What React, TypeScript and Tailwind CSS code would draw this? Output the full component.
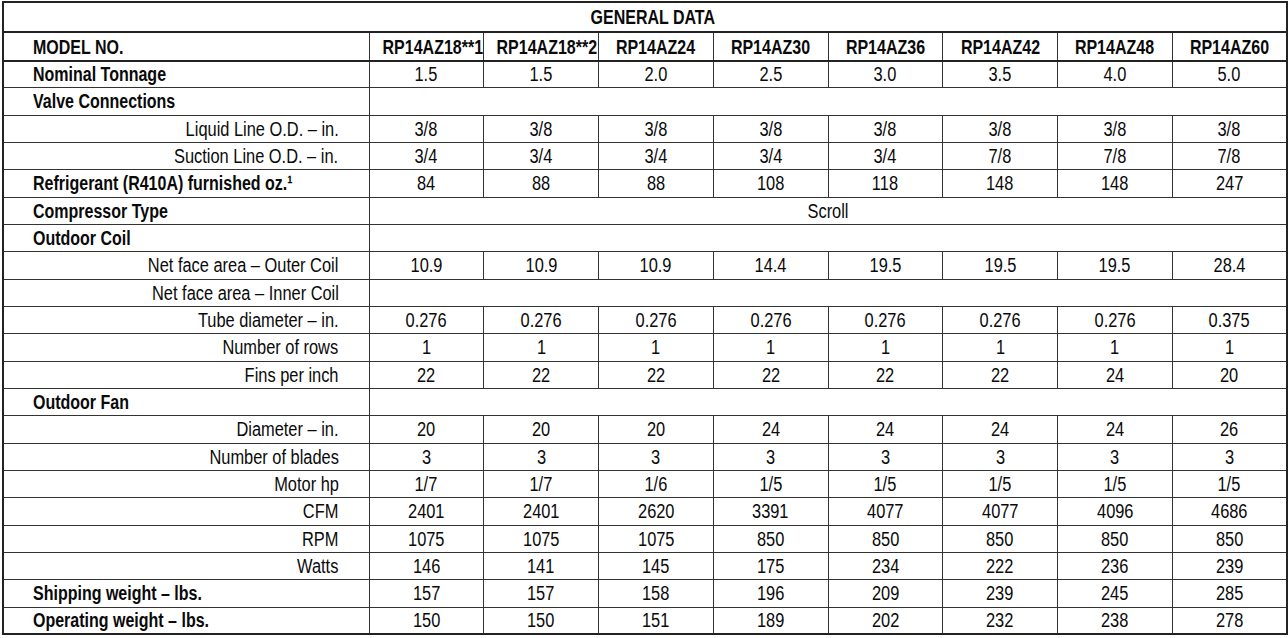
import React from "react";

type Row = {
  label: string;
  bold?: boolean;
  values?: string[];
  span?: string;
};

const MODELS = [
  "RP14AZ18**1",
  "RP14AZ18**2",
  "RP14AZ24",
  "RP14AZ30",
  "RP14AZ36",
  "RP14AZ42",
  "RP14AZ48",
  "RP14AZ60",
];

const ROWS: Row[] = [
  { label: "Nominal Tonnage", bold: true, values: ["1.5", "1.5", "2.0", "2.5", "3.0", "3.5", "4.0", "5.0"] },
  { label: "Valve Connections", bold: true, span: "" },
  { label: "Liquid Line O.D. – in.", values: ["3/8", "3/8", "3/8", "3/8", "3/8", "3/8", "3/8", "3/8"] },
  { label: "Suction Line O.D. – in.", values: ["3/4", "3/4", "3/4", "3/4", "3/4", "7/8", "7/8", "7/8"] },
  { label: "Refrigerant (R410A) furnished oz.¹", bold: true, values: ["84", "88", "88", "108", "118", "148", "148", "247"] },
  { label: "Compressor Type", bold: true, span: "Scroll" },
  { label: "Outdoor Coil", bold: true, span: "" },
  { label: "Net face area – Outer Coil", values: ["10.9", "10.9", "10.9", "14.4", "19.5", "19.5", "19.5", "28.4"] },
  { label: "Net face area – Inner Coil", span: "" },
  { label: "Tube diameter – in.", values: ["0.276", "0.276", "0.276", "0.276", "0.276", "0.276", "0.276", "0.375"] },
  { label: "Number of rows", values: ["1", "1", "1", "1", "1", "1", "1", "1"] },
  { label: "Fins per inch", values: ["22", "22", "22", "22", "22", "22", "24", "20"] },
  { label: "Outdoor Fan", bold: true, span: "" },
  { label: "Diameter – in.", values: ["20", "20", "20", "24", "24", "24", "24", "26"] },
  { label: "Number of blades", values: ["3", "3", "3", "3", "3", "3", "3", "3"] },
  { label: "Motor hp", values: ["1/7", "1/7", "1/6", "1/5", "1/5", "1/5", "1/5", "1/5"] },
  { label: "CFM", values: ["2401", "2401", "2620", "3391", "4077", "4077", "4096", "4686"] },
  { label: "RPM", values: ["1075", "1075", "1075", "850", "850", "850", "850", "850"] },
  { label: "Watts", values: ["146", "141", "145", "175", "234", "222", "236", "239"] },
  { label: "Shipping weight – lbs.", bold: true, values: ["157", "157", "158", "196", "209", "239", "245", "285"] },
  { label: "Operating weight – lbs.", bold: true, values: ["150", "150", "151", "189", "202", "232", "238", "278"] },
];

const font = {
  fontFamily: '"Liberation Sans", Arial, sans-serif',
};

// condensed look: Liberation Sans squeezed horizontally
function Txt({ children, align, bold }: { children: React.ReactNode; align: "left" | "right" | "center"; bold?: boolean }) {
  const origin = align === "left" ? "origin-left" : align === "right" ? "origin-right" : "origin-center";
  return (
    <span className={`inline-block whitespace-nowrap ${origin} ${bold ? "font-bold scale-x-[0.8]" : "scale-x-[0.82]"}`}>
      {children}
    </span>
  );
}

export default function App() {
  return (
    <div className="bg-white w-[1288px] h-[638px] pt-[1px] pl-[2px]" style={font}>
      <table className="table-fixed border-collapse w-[1284px] text-[20px] leading-none text-[#0a0a0a] border-2 border-[#222]">
        <colgroup>
          <col className="w-[366px]" />
          {MODELS.map((m) => (
            <col key={m} className="w-[114.75px]" />
          ))}
        </colgroup>
        <tbody>
          {/* Title */}
          <tr className="h-[30px]">
            <td colSpan={9} className="border-t border-[#555] border-b-2 border-b-[#222] text-center pl-4">
              <Txt align="center" bold>GENERAL DATA</Txt>
            </td>
          </tr>

          {/* Model header */}
          <tr className="h-[28.5px]">
            <td className="border-b-2 border-b-[#222] border-r-[1.5px] border-r-[#333] pl-[29px] pt-[1px]">
              <Txt align="left" bold>MODEL NO.</Txt>
            </td>
            {MODELS.map((m) => (
              <td
                key={m}
                className="border-b-2 border-b-[#222] border-r-[1.5px] border-r-[#333] text-center pt-[1px]"
              >
                <Txt align="center" bold>{m}</Txt>
              </td>
            ))}
          </tr>

          {ROWS.map((r) => (
            <tr key={r.label} className="h-[27.33px]">
              <td
                className={`border-b-[1.5px] border-b-[#333] border-r-[1.5px] border-r-[#333] ${
                  r.bold ? "pl-[29px] text-left" : "pr-[30px] text-right"
                }`}
              >
                <Txt align={r.bold ? "left" : "right"} bold={r.bold}>
                  {r.label}
                </Txt>
              </td>
              {r.values ? (
                r.values.map((v, i) => (
                  <td key={i} className="border-b-[1.5px] border-b-[#333] border-r-[1.5px] border-r-[#333] text-center">
                    <Txt align="center">{v}</Txt>
                  </td>
                ))
              ) : (
                <td colSpan={8} className="border-b-[1.5px] border-b-[#333] text-center">
                  <Txt align="center">{r.span}</Txt>
                </td>
              )}
            </tr>
          ))}
        </tbody>
      </table>
    </div>
  );
}
